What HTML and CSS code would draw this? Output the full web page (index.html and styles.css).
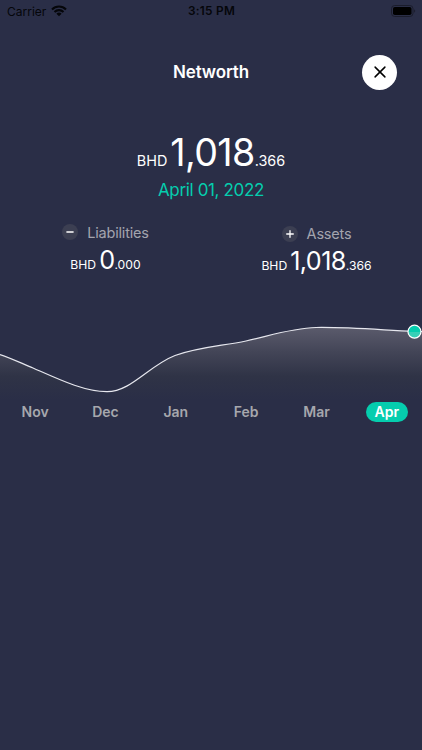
FILE: index.html
```html
<!DOCTYPE html>
<html lang="en">
<head>
    <meta charset="UTF-8">
    <meta name="viewport" content="width=device-width, initial-scale=1.0">
    <title>Networth</title>
    <link rel="stylesheet" href="styles.css">
</head>
<body>

    <div class="status-bar">
        <div class="status-left">
            <span class="carrier">Carrier</span>
            <svg class="wifi" width="16" height="12" viewBox="0 0 16 12">
                <path d="M1 4.4a10 10 0 0 1 14 0M3.5 7a6.4 6.4 0 0 1 9 0" fill="none" stroke="#05060a" stroke-width="2.1"/>
                <path d="M8 11.3L5.4 8.7a3.7 3.7 0 0 1 5.2 0z" fill="#05060a"/>
            </svg>
        </div>
        <span class="time">3:15 PM</span>
        <div class="status-right">
            <svg width="25" height="12" viewBox="0 0 25 12">
                <rect x=".5" y=".5" width="21.5" height="11" rx="3.2" fill="none" stroke="#1b1d2c"/>
                <rect x="2" y="2" width="18.5" height="8" rx="1.8" fill="#000"/>
                <path d="M23.2 4.2v3.6c1.3-.6 1.3-3 0-3.6z" fill="#1b1d2c"/>
            </svg>
        </div>
    </div>

    <header class="header">
        <h1>Networth</h1>
        <button class="close" aria-label="Close">
            <svg width="12" height="12" viewBox="0 0 12 12">
                <path d="M1.1 1.1l9.8 9.8M10.9 1.1l-9.8 9.8" stroke="#000" stroke-width="1.5" stroke-linecap="round"/>
            </svg>
        </button>
    </header>

    <section class="total">
        <div class="amount amount-lg">
            <span class="currency">BHD</span><span class="whole">1,018</span><span class="decimal">.366</span>
        </div>
        <div class="date">April 01, 2022</div>
    </section>

    <section class="breakdown">
        <div class="item">
            <div class="label">
                <svg class="sign" width="16" height="16" viewBox="0 0 16 16">
                    <circle cx="8" cy="8" r="8" fill="#3c3f52"/>
                    <path d="M4.9 8h6.2" stroke="#fff" stroke-width="1.4" stroke-linecap="round"/>
                </svg>
                <span class="name">Liabilities</span>
            </div>
            <div class="amount">
                <span class="currency">BHD</span><span class="whole">0</span><span class="decimal">.000</span>
            </div>
        </div>
        <div class="item item-assets">
            <div class="label">
                <svg class="sign" width="16" height="16" viewBox="0 0 16 16">
                    <circle cx="8" cy="8" r="8" fill="#3c3f52"/>
                    <path d="M4.7 8h6.6M8 4.7v6.6" stroke="#fff" stroke-width="1.3" stroke-linecap="round"/>
                </svg>
                <span class="name">Assets</span>
            </div>
            <div class="amount">
                <span class="currency">BHD</span><span class="whole">1,018</span><span class="decimal">.366</span>
            </div>
        </div>
    </section>

    <section class="chart">
        <svg width="422" height="90" viewBox="0 0 422 90">
            <defs>
                <linearGradient id="area" gradientUnits="userSpaceOnUse" x1="0" y1="16" x2="0" y2="90">
                    <stop offset="0" stop-color="#5c5c6d"/>
                    <stop offset=".35" stop-color="#434557"/>
                    <stop offset=".68" stop-color="#2f3346"/>
                    <stop offset="1" stop-color="#2a2e47"/>
                </linearGradient>
                <linearGradient id="dot" x1="0" y1="0" x2="0" y2="1">
                    <stop offset=".5" stop-color="#05cdae"/>
                    <stop offset=".5" stop-color="#37d0b7"/>
                </linearGradient>
            </defs>
            <path d="M0 44.5C12 48.5 22 53.5 33 58C58 69 84 81.7 107 81.7C131 81.7 149 55.5 175 45.5C199 37 222 36 246 31C269 26 292 18 316 17.5C349 17 381 20 414 21.5L422 21.5V90H0Z" fill="url(#area)"/>
            <path d="M0 44.5C12 48.5 22 53.5 33 58C58 69 84 81.7 107 81.7C131 81.7 149 55.5 175 45.5C199 37 222 36 246 31C269 26 292 18 316 17.5C349 17 381 20 414 21.5L422 21.5" fill="none" stroke="#e6e7ee" stroke-width="1.2"/>
            <circle cx="414.5" cy="21.7" r="6.5" fill="url(#dot)" stroke="#fff" stroke-width="1.2"/>
        </svg>
    </section>

    <nav class="months">
        <span>Nov</span>
        <span>Dec</span>
        <span>Jan</span>
        <span>Feb</span>
        <span>Mar</span>
        <span class="active"><b>Apr</b></span>
    </nav>

</body>
</html>
```

FILE: styles.css
```css
:root {
    --background: #2a2e47;
    --text: #ffffff;
    --muted: #a3a4ae;
    --accent: #05cdae;
}

* {
    box-sizing: border-box;
    margin: 0;
    padding: 0;
}

body {
    height: 750px;
    overflow: hidden;
    font-family: Inter, "Liberation Sans", sans-serif;
    background-color: var(--background);
    color: var(--text);
}

svg {
    display: block;
}

.status-bar {
    display: flex;
    align-items: center;
    height: 22px;
    padding: 0 6px 0 7px;
    color: #05060a;
    font-size: 12px;
}

.status-left,
.status-right {
    flex: 1;
    display: flex;
    align-items: center;
}

.status-left {
    gap: 5px;
}

.status-right {
    justify-content: flex-end;
}

.time {
    font-weight: 600;
    font-size: 11.8px;
    letter-spacing: 0.3px;
}

.header {
    display: flex;
    justify-content: flex-end;
    align-items: center;
    height: 100px;
    padding-right: 25px;
}

.header h1 {
    width: 76px;
    margin-right: 113px;
    font-size: 17px;
    font-weight: 600;
    white-space: nowrap;
    letter-spacing: -0.15px;
}

.close {
    display: flex;
    align-items: center;
    justify-content: center;
    width: 35px;
    height: 35px;
    border: none;
    border-radius: 50%;
    background-color: #fff;
}

.total {
    height: 100px;
    padding-top: 7px;
    text-align: center;
}

.amount {
    display: flex;
    justify-content: center;
    align-items: baseline;
    height: 32px;
    line-height: 32px;
    font-size: 12.2px;
}

.currency {
    margin-right: 3px;
}

.amount .whole {
    font-size: 25.2px;
    letter-spacing: -0.6px;
}

.amount-lg {
    height: 49px;
    line-height: 48px;
    font-size: 14.4px;
}

.amount-lg .whole {
    font-size: 37.6px;
    letter-spacing: -0.6px;
}

.date {
    line-height: 24px;
    font-size: 17px;
    letter-spacing: -0.35px;
    color: var(--accent);
}

.breakdown {
    display: flex;
    height: 88px;
}

.item {
    width: 50%;
}

.item-assets {
    padding-top: 1px;
}

.label {
    display: flex;
    justify-content: center;
    align-items: center;
    gap: 9px;
    height: 22px;
    padding-bottom: 2px;
    font-size: 14.5px;
    letter-spacing: -0.2px;
    color: var(--muted);
}

.item-assets .label {
    padding-bottom: 0;
}

.item-assets .name {
    padding-bottom: 2px;
}

.chart {
    height: 90px;
}

.months {
    display: flex;
    height: 24px;
}

.months span {
    display: flex;
    flex: 1;
    align-items: center;
    justify-content: center;
    padding-bottom: 1px;
    font-size: 14px;
    font-weight: 600;
    color: #a6a7ad;
}

.months .active {
    padding-bottom: 0;
}

.months b {
    width: 42px;
    line-height: 20px;
    border-radius: 10px;
    text-align: center;
    font-weight: 600;
    background-color: var(--accent);
    color: #fff;
}
```
